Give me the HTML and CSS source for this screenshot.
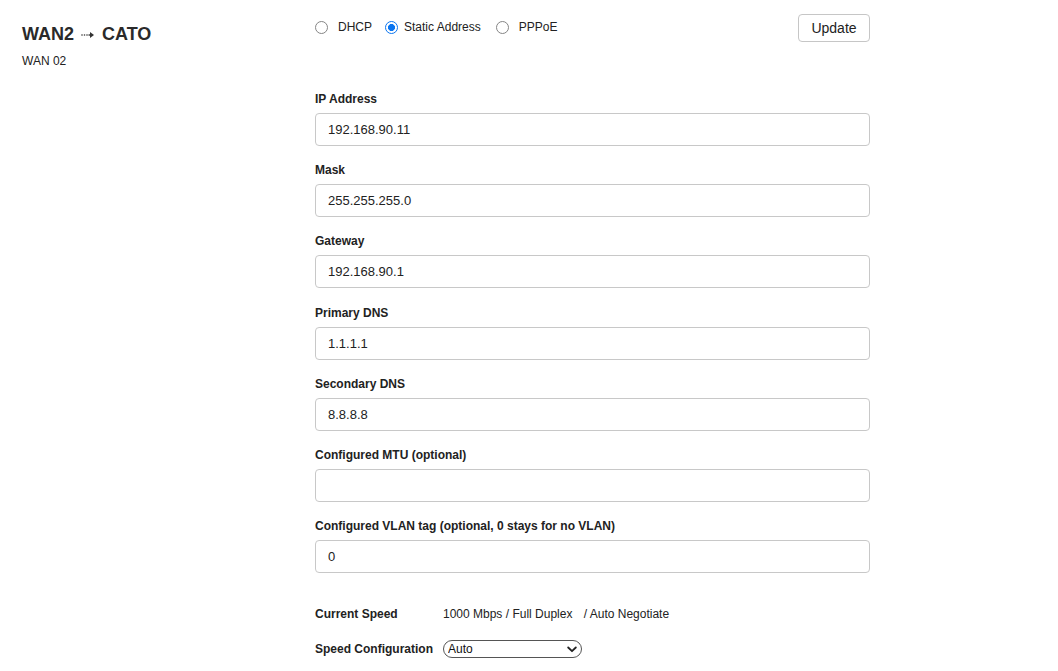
FILE: index.html
```html
<!DOCTYPE html>
<html>
<head>
<meta charset="utf-8">
<link rel="stylesheet" href="styles.css">
</head>
<body>
<div class="page">
  <div class="side">
    <h2 class="title">WAN2 <svg class="arrow" width="14" height="8" viewBox="0 0 14 8"><circle cx="1" cy="4" r="0.8" fill="#333"/><circle cx="3.5" cy="4" r="0.8" fill="#333"/><circle cx="6" cy="4" r="0.8" fill="#333"/><line x1="7.5" y1="4" x2="10" y2="4" stroke="#333" stroke-width="1.4"/><path d="M9 1 L13 4 L9 7 Z" fill="#333"/></svg> CATO</h2>
    <div class="sub">WAN 02</div>
  </div>
  <div class="main">
    <div class="toprow">
      <div class="radios">
        <label class="opt"><input type="radio" name="mode"> DHCP</label>
        <label class="opt"><input type="radio" name="mode" checked> Static Address</label>
        <label class="opt"><input type="radio" name="mode"> PPPoE</label>
      </div>
      <button class="btn">Update</button>
    </div>
    <div class="fields">
      <div class="field"><div class="lbl">IP Address</div><input class="txt" value="192.168.90.11"></div>
      <div class="field"><div class="lbl">Mask</div><input class="txt" value="255.255.255.0"></div>
      <div class="field"><div class="lbl">Gateway</div><input class="txt" value="192.168.90.1"></div>
      <div class="field"><div class="lbl">Primary DNS</div><input class="txt" value="1.1.1.1"></div>
      <div class="field"><div class="lbl">Secondary DNS</div><input class="txt" value="8.8.8.8"></div>
      <div class="field"><div class="lbl">Configured MTU (optional)</div><input class="txt" value=""></div>
      <div class="field"><div class="lbl">Configured VLAN tag (optional, 0 stays for no VLAN)</div><input class="txt" value="0"></div>
    </div>
    <div class="speed">
      <div class="srow"><div class="slbl">Current Speed</div><div class="sval">1000 Mbps / Full Duplex <span class="neg">/ Auto Negotiate</span></div></div>
      <div class="srow"><div class="slbl">Speed Configuration</div>
        <div class="selwrap"><select class="sel"><option>Auto</option></select><svg class="chev" width="10" height="7" viewBox="0 0 10 7"><path d="M1.2 1.5 L5 5.2 L8.8 1.5" fill="none" stroke="#222" stroke-width="1.8" stroke-linecap="round" stroke-linejoin="round"/></svg></div>
      </div>
    </div>
  </div>
</div>
</body>
</html>
```
FILE: styles.css
```css
* { box-sizing: border-box; }
body {
  margin: 0;
  background: #fff;
  font-family: "Liberation Sans", Arial, sans-serif;
  color: #222;
}
.page {
  display: flex;
  align-items: flex-start;
}
.side {
  width: 315px;
  padding: 24px 0 0 22px;
}
.title {
  margin: 0;
  font-size: 18px;
  line-height: 20px;
  font-weight: bold;
  color: #2a2a2a;
  display: flex;
  align-items: center;
  gap: 7px;
}
.arrow { display: block; margin-top: 1px; }
.sub {
  margin-top: 10px;
  font-size: 12px;
  line-height: 14px;
  color: #222;
}
.main {
  width: 555px;
  padding-top: 14px;
}
.toprow {
  display: flex;
  justify-content: space-between;
  align-items: flex-start;
  height: 28px;
}
.radios {
  display: flex;
  padding-top: 6px;
  font-size: 12px;
  line-height: 14px;
}
.opt {
  display: flex;
  align-items: center;
  margin-right: 13px;
  color: #222;
}
.opt input {
  appearance: none;
  -webkit-appearance: none;
  width: 13px;
  height: 13px;
  margin: 0 10px 0 0;
  border: 1px solid #858585;
  border-radius: 50%;
  background: #fff;
}
.opt input:checked {
  border: 1.5px solid #0a75f0;
  background: radial-gradient(circle, #0a75f0 0 3.2px, #fff 3.8px);
}
.opt:nth-child(2) input { margin-right: 6px; }
.opt:nth-child(3) input { margin-right: 10px; }
.opt:nth-child(2) { margin-right: 15px; }
.btn {
  width: 72px;
  height: 28px;
  border: 1px solid #c6c6c6;
  border-radius: 4px;
  background: #fff;
  font-family: "Liberation Sans", Arial, sans-serif;
  font-size: 14px;
  color: #222;
  padding: 0;
}
.fields {
  margin-top: 50px;
  display: flex;
  flex-direction: column;
  gap: 17.2px;
}
.field {
  display: flex;
  flex-direction: column;
  gap: 7px;
}
.lbl {
  font-size: 12px;
  line-height: 14px;
  font-weight: bold;
  color: #222;
}
.txt {
  width: 555px;
  height: 33px;
  border: 1px solid #c8c8c8;
  border-radius: 4px;
  padding: 0 12px;
  font-family: "Liberation Sans", Arial, sans-serif;
  font-size: 13px;
  color: #222;
  outline: none;
}
.speed {
  margin-top: 34px;
  display: flex;
  flex-direction: column;
  gap: 19px;
}
.srow {
  display: flex;
  align-items: center;
  font-size: 12px;
  line-height: 14px;
}
.slbl {
  width: 128px;
  font-weight: bold;
}
.neg { margin-left: 8px; }
.selwrap {
  position: relative;
  width: 139px;
  height: 18px;
}
.sel {
  appearance: none;
  -webkit-appearance: none;
  width: 139px;
  height: 18px;
  border: 1px solid #555;
  border-radius: 9px;
  background: #fff;
  font-family: "Liberation Sans", Arial, sans-serif;
  font-size: 12px;
  color: #111;
  padding: 0 0 0 4px;
  outline: none;
}
.chev {
  position: absolute;
  right: 5px;
  top: 6px;
  pointer-events: none;
}
```
